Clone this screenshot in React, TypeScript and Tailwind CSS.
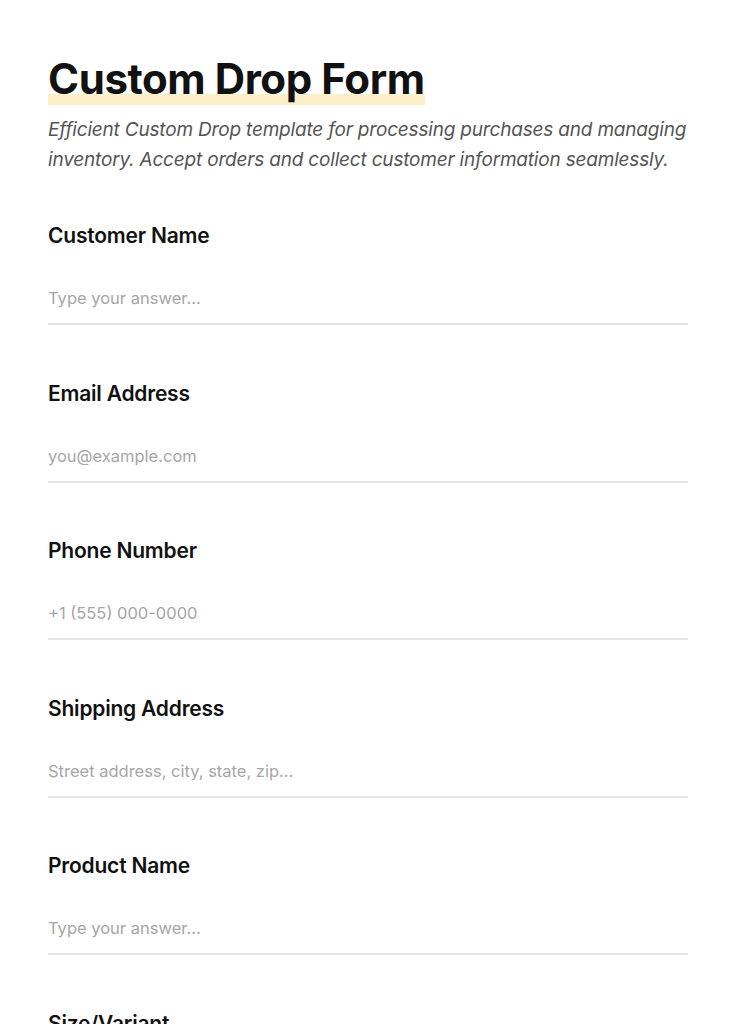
import { useState } from 'react';

const FIELDS = [
  { key: 'name', label: 'Customer Name', placeholder: 'Type your answer...', type: 'text' },
  { key: 'email', label: 'Email Address', placeholder: 'you@example.com', type: 'email' },
  { key: 'phone', label: 'Phone Number', placeholder: '+1 (555) 000-0000', type: 'tel' },
  { key: 'address', label: 'Shipping Address', placeholder: 'Street address, city, state, zip...', type: 'text' },
  { key: 'product', label: 'Product Name', placeholder: 'Type your answer...', type: 'text' },
  { key: 'variant', label: 'Size/Variant', placeholder: 'Type your answer...', type: 'text' },
  { key: 'quantity', label: 'Quantity', placeholder: '1', type: 'number' },
];

export default function App() {
  const [values, setValues] = useState<Record<string, string>>({});

  const handleChange = (key: string, value: string) => {
    setValues({ ...values, [key]: value });
  };

  return (
    <div className="min-h-screen bg-white" style={{ fontFamily: 'Inter, "Noto Sans", sans-serif' }}>
      <div className="px-12 pt-[52px] pb-24">
        <h1 className="inline-block text-[42px] leading-[53px] font-bold tracking-[-0.01em] text-[#111111] bg-[linear-gradient(to_bottom,transparent_42px,#fdf0c9_42px)]">
          Custom Drop Form
        </h1>
        <p className="mt-[10px] text-[19px] leading-[30px] italic text-[#555555] tracking-[-0.01em]">
          Efficient Custom Drop template for processing purchases and managing inventory. Accept orders and collect
          customer information seamlessly.
        </p>

        <div className="mt-[47px] space-y-[54.5px]">
          {FIELDS.map((field) => (
            <div key={field.key}>
              <label className="block text-[21px] leading-7 font-semibold tracking-[-0.01em] text-[#111111]">
                {field.label}
              </label>
              <input
                type={field.type}
                value={values[field.key] ?? ''}
                onChange={(e) => handleChange(field.key, e.target.value)}
                placeholder={field.placeholder}
                className="mt-[36px] block w-full text-[16.5px] leading-6 pb-[13px] border-b-2 border-[#e5e5e5] text-[#222222] placeholder:text-[#a6a6a6] focus:outline-none"
              />
            </div>
          ))}
        </div>
      </div>
    </div>
  );
}
